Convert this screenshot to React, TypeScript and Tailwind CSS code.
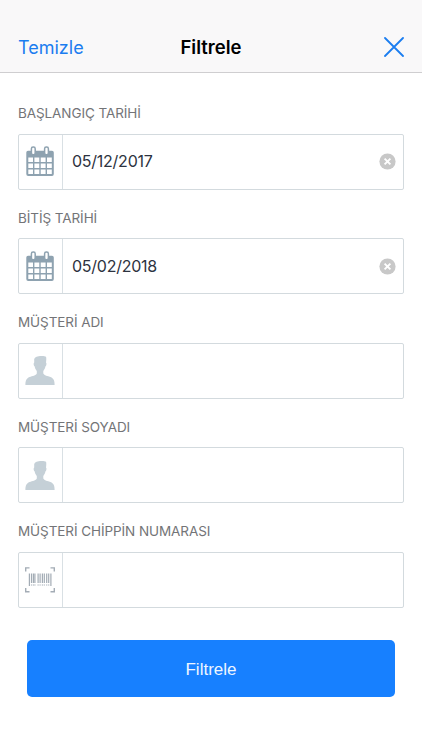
import React from "react";

function CalendarIcon() {
  return (
    <svg width="28" height="31" viewBox="0 0 28 31" aria-hidden="true">
      <path
        fillRule="evenodd"
        fill="#8ea2b0"
        d="M2 4.8H26Q27.8 4.8 27.8 6.6V28Q27.8 30 26 30H2.2Q.3 30 .3 28V6.6Q.3 4.8 2 4.8ZM2.3 11.5V16H7V11.5ZM8.4 11.5V16H13.3V11.5ZM14.7 11.5V16H19.6V11.5ZM21 11.5V16H25.8V11.5ZM2.3 17.4V22H7V17.4ZM8.4 17.4V22H13.3V17.4ZM14.7 17.4V22H19.6V17.4ZM21 17.4V22H25.8V17.4ZM2.3 23.4V28H7V23.4ZM8.4 23.4V28H13.3V23.4ZM14.7 23.4V28H19.6V23.4ZM21 23.4V28H25.8V23.4Z"
      />
      <rect x="5.4" y="1.1" width="3.8" height="7.6" rx="1.7" fill="#fff" stroke="#8ea2b0" strokeWidth="1.5" />
      <rect x="18.6" y="1.1" width="3.8" height="7.6" rx="1.7" fill="#fff" stroke="#8ea2b0" strokeWidth="1.5" />
    </svg>
  );
}

function PersonIcon() {
  return (
    <svg width="30" height="31" viewBox="0 0 30 31" aria-hidden="true">
      <path
        fill="#c5d0d7"
        d="M9.2 5.3C9 2.6 11.5 1.2 15 1C17.5.8 20 .9 21 1.8C21.5 3 21.3 5.5 21 7.6C21.9 8 21.4 11 20.4 11.6C20 13.6 19.2 15 18.3 15.9V18.4C19.3 20.5 22.5 20.8 25.5 22.1C28.6 23.5 29.6 25.5 29.6 30H.4C.4 25.5 1.5 23.5 4.5 22.1C7.5 20.8 10.9 20.5 11.8 18.4V15.9C10.8 15 10 13.6 9.7 11.6C8.6 11 8.2 8 9.2 7.6Z"
      />
    </svg>
  );
}

function BarcodeIcon() {
  return (
    <svg width="30" height="26" viewBox="0 0 30 26" aria-hidden="true" fill="none" stroke="#a3acb5">
      <path strokeWidth="1.4" d="M.7 4.5V.9H4.5M25.5 .9H29.3V4.5M.7 21V24.8H4.5M25.5 24.8H29.3V21" />
      <path strokeWidth="1.2" d="M4.4 6.5V19M25.9 6.5V19" />
      <path strokeWidth="1.2" d="M6.5 6.5V16M8.4 6.5V16M9.9 6.5V16M13.1 6.5V16M15.1 6.5V16M17.4 6.5V16M19.3 6.5V16M21.7 6.5V16M23.7 6.5V16" />
      <path strokeWidth="1.2" d="M6.5 17.4V18.6M8.4 17.4V18.6M9.9 17.4V18.6M13.1 17.4V18.6M15.1 17.4V18.6M17.4 17.4V18.6M19.3 17.4V18.6M21.7 17.4V18.6M23.7 17.4V18.6" />
    </svg>
  );
}

function ClearIcon() {
  return (
    <svg width="17" height="17" viewBox="0 0 17 17" aria-hidden="true">
      <circle cx="8.5" cy="8.5" r="8.1" fill="#c8c8c8" />
      <path d="M5.6 5.6L11.4 11.4M11.4 5.6L5.6 11.4" stroke="#fff" strokeWidth="1.9" />
    </svg>
  );
}

interface FieldProps {
  label: string;
  icon: React.ReactNode;
  value?: string;
}

function Field({ label, icon, value }: FieldProps) {
  return (
    <div className="h-[104.6px]">
      <div className="h-5 text-[13.5px] leading-5 tracking-[-0.08px] whitespace-nowrap text-[#737477]">{label}</div>
      <div className="mt-[10.5px] flex h-14 rounded-[2px] border border-[#d3dade]">
        <div className="flex w-11 shrink-0 items-center justify-center border-r border-[#d9e0e4] pr-[1.5px]">{icon}</div>
        <div className="flex flex-1 items-center justify-between pr-[7px] pl-[9px] text-[16px] leading-6 tracking-[-0.25px] text-[#2d3340]">
          <span className="pb-px">{value}</span>
          {value && <ClearIcon />}
        </div>
      </div>
    </div>
  );
}

export default function App() {
  return (
    <div className="flex h-[750px] w-[422px] flex-col bg-white font-['Inter','Liberation_Sans',sans-serif]">
      <header className="flex h-[73px] shrink-0 items-end justify-between border-b border-[#cfced0] bg-[#f9f8f9] px-[18px]">
        <div className="mb-[11px] w-20 text-[18px] leading-[26px] text-[#1b7df0]">Temizle</div>
        <div className="mb-3 text-[18.5px] leading-[26px] font-semibold text-black">Filtrele</div>
        <div className="mb-[15px] flex w-20 justify-end">
          <svg width="20" height="20" viewBox="0 0 20 20" aria-hidden="true">
            <path d="M1 1L19 19M19 1L1 19" stroke="#1b7df0" strokeWidth="1.8" strokeLinecap="round" />
          </svg>
        </div>
      </header>
      <main className="px-[18px] pt-[30px]">
        <Field label="BAŞLANGIÇ TARİHİ" icon={<CalendarIcon />} value="05/12/2017" />
        <Field label="BİTİŞ TARİHİ" icon={<CalendarIcon />} value="05/02/2018" />
        <Field label="MÜŞTERİ ADI" icon={<PersonIcon />} />
        <Field label="MÜŞTERİ SOYADI" icon={<PersonIcon />} />
        <Field label="MÜŞTERİ CHİPPİN NUMARASI" icon={<BarcodeIcon />} />
        <button className="mx-[9px] mt-[14.5px] flex h-[56.5px] w-[368px] items-center justify-center rounded-[5px] bg-[#1780ff] pt-[2px] font-['Liberation_Sans',sans-serif] text-[17px] text-[#eef6ff]">
          Filtrele
        </button>
      </main>
    </div>
  );
}
